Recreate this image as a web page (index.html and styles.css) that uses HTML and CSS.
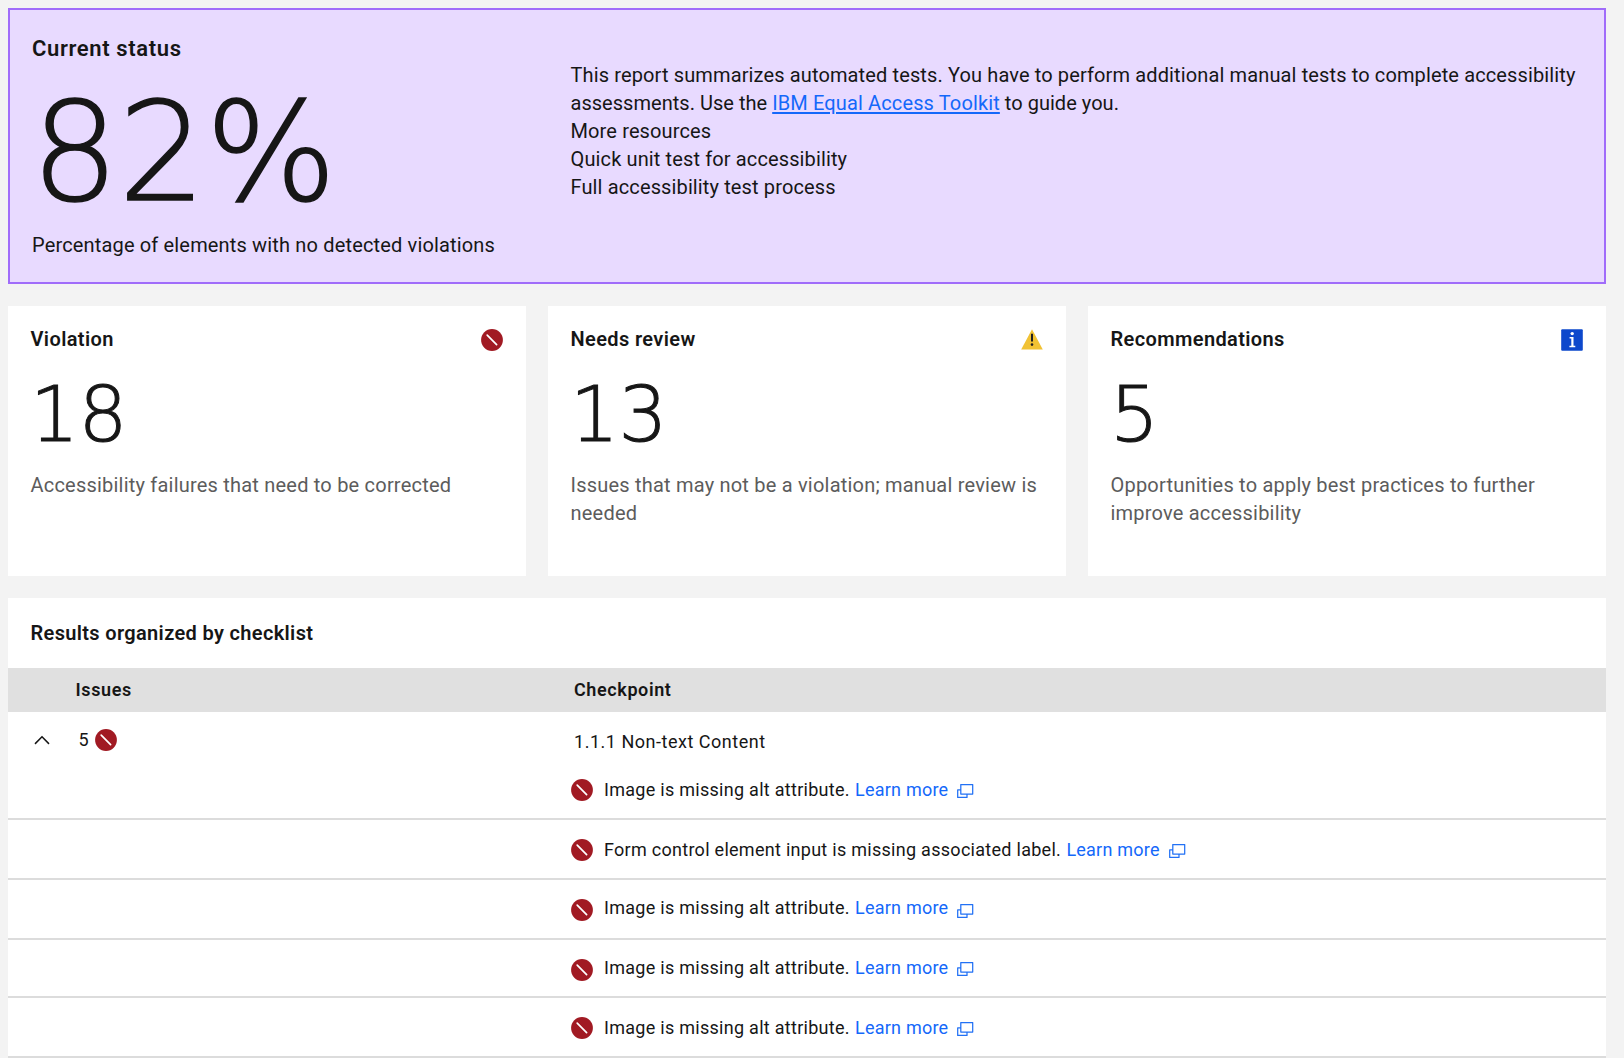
FILE: index.html
```html
<!DOCTYPE html>
<html lang="en">
<head>
<meta charset="utf-8">
<title>Accessibility report</title>
<link rel="stylesheet" href="styles.css">
</head>
<body>
<svg class="defs" aria-hidden="true">
  <symbol id="violation" viewBox="0 0 22 22"><circle cx="11" cy="11" r="10.9" fill="#a11a23"/><path d="M6.2 6.2L15.6 15.6" stroke="#fff" stroke-width="1.7" stroke-linecap="round"/></symbol>
  <symbol id="launch" viewBox="0 0 17 15"><path d="M3.8.6h11.9v9.5H3.8zM3.8 5.8H.7v7.6h9.3v-3.2" fill="none" stroke="#2271f5" stroke-width="1.25" stroke-linejoin="round"/></symbol>
</svg>

<section class="status">
  <div class="score">
    <h1 class="score-title">Current status</h1>
    <div class="score-value">82%</div>
    <p class="score-note">Percentage of elements with no detected violations</p>
  </div>
  <div class="summary">
    <p>This report summarizes automated tests. You have to perform additional manual tests to complete accessibility <span class="guide">assessments. Use the <a class="toolkit" href="#">IBM Equal Access Toolkit</a> to guide you.</span></p>
    <p>More resources</p>
    <p>Quick unit test for accessibility</p>
    <p>Full accessibility test process</p>
  </div>
</section>

<section class="cards">
  <article class="card">
    <div class="card-head"><h2>Violation</h2><svg class="icon"><use href="#violation"/></svg></div>
    <div class="count">18</div>
    <p>Accessibility failures that need to be corrected</p>
  </article>
  <article class="card">
    <div class="card-head"><h2>Needs review</h2>
      <svg class="icon" viewBox="0 0 22 22"><path d="M11 .3L21.8 20.4H.2z" fill="#f1c234"/><path d="M10 4.8h2v7.8h-2z" fill="#202020"/><circle cx="11" cy="15.6" r="1.3" fill="#202020"/></svg></div>
    <div class="count">13</div>
    <p>Issues that may not be a violation; manual review is needed</p>
  </article>
  <article class="card">
    <div class="card-head"><h2>Recommendations</h2>
      <svg class="icon" viewBox="0 0 22 22"><rect x=".2" y=".2" width="21.6" height="21.6" rx="1" fill="#0d48cc"/><circle cx="11.2" cy="4.6" r="1.7" fill="#fff"/><path d="M8.6 8h3.9v8.7h1.8v1.5H8.4v-1.5h1.9V9.5H8.6z" fill="#fff"/></svg></div>
    <div class="count">5</div>
    <p>Opportunities to apply best practices to further improve accessibility</p>
  </article>
</section>

<section class="results">
  <h2 class="results-title">Results organized by checklist</h2>
  <div class="row header"><span>Issues</span><span>Checkpoint</span></div>
  <div class="row group">
    <div class="issues">
      <svg class="chevron" viewBox="0 0 16 10"><path d="M1 8.9L8 1.8l7 7.1" fill="none" stroke="#161616" stroke-width="1.5"/></svg>
      <span>5</span>
      <svg class="icon"><use href="#violation"/></svg>
    </div>
    <span class="checkpoint">1.1.1 Non-text Content</span>
  </div>
  <ul class="items">
    <li class="item"><svg class="icon"><use href="#violation"/></svg><span class="text">Image is missing alt attribute.</span><a class="text" href="#">Learn more</a><svg class="launch"><use href="#launch"/></svg></li>
    <li class="item"><svg class="icon"><use href="#violation"/></svg><span class="text">Form control element input is missing associated label.</span><a class="text" href="#">Learn more</a><svg class="launch"><use href="#launch"/></svg></li>
    <li class="item raised"><svg class="icon"><use href="#violation"/></svg><span class="text">Image is missing alt attribute.</span><a class="text" href="#">Learn more</a><svg class="launch"><use href="#launch"/></svg></li>
    <li class="item raised compact"><svg class="icon"><use href="#violation"/></svg><span class="text">Image is missing alt attribute.</span><a class="text" href="#">Learn more</a><svg class="launch"><use href="#launch"/></svg></li>
    <li class="item"><svg class="icon"><use href="#violation"/></svg><span class="text">Image is missing alt attribute.</span><a class="text" href="#">Learn more</a><svg class="launch"><use href="#launch"/></svg></li>
  </ul>
</section>
</body>
</html>
```
FILE: styles.css
```css
* { box-sizing: border-box; }

body {
  margin: 0;
  padding: 8px 18px 0 8px;
  background: #f3f3f3;
  color: #161616;
  font: 400 20px/28px Roboto, "Noto Sans", sans-serif;
  letter-spacing: 0.128px;
  overflow: hidden;
}

h1, h2, p, ul { margin: 0; padding: 0; }
h2 { font-size: 20px; font-weight: 600; letter-spacing: 0.38px; }
a { color: #1468fa; text-decoration: none; }
.defs { display: none; }
.icon { width: 22px; height: 22px; flex: none; display: block; }

.status {
  display: grid;
  grid-template-columns: 538.5px 1fr;
  height: 276px;
  padding-left: 22px;
  background: #e8daff;
  border: 2px solid #a06cfa;
}
.score { padding-top: 25px; }
.score-title { font-size: 22px; font-weight: 600; line-height: 28px; letter-spacing: 0.63px; }
.score-value {
  margin: 18px 0 6px -1px;
  font: 200 138px/144px "DejaVu Sans", sans-serif;
  letter-spacing: -0.6px;
  -webkit-text-stroke: 1.5px #161616;
}
.score-note { letter-spacing: 0.16px; }
.summary { padding: 51px 20px 0 0; }
.guide { letter-spacing: 0.03px; }
.toolkit {
  letter-spacing: 0.128px;
  text-decoration: underline;
  text-decoration-thickness: 2px;
  text-underline-offset: 2px;
}

.cards {
  display: grid;
  grid-template-columns: repeat(3, 518px);
  gap: 22px;
  margin: 22px 0;
}
.card { height: 270px; padding: 19px 23px 0 22.5px; background: #fff; }
.card-head { display: flex; justify-content: space-between; }
.card-head .icon { margin-top: 4px; }
.count {
  margin: 16px 0 10px -0.5px;
  font: 200 77px/92px "DejaVu Sans", sans-serif;
  letter-spacing: -0.6px;
  -webkit-text-stroke: 1px #161616;
}
.card p { color: #5c5c5c; letter-spacing: 0.21px; }

.results { background: #fff; font-size: 18px; letter-spacing: 0.28px; }
.results-title { height: 70px; padding: 21px 22.5px; letter-spacing: 0.34px; }
.row { display: grid; grid-template-columns: 566px 1fr; }
.header {
  height: 44px;
  background: #e0e0e0;
  font-weight: 600;
  line-height: 44px;
  letter-spacing: 0.6px;
}
.header span:first-child { padding-left: 67.5px; }
.group { height: 48px; }
.issues { display: flex; padding: 14px 0 0 26px; }
.issues .icon { margin: 3px 0 0 6px; }
.issues span { margin-left: 28.5px; }
.chevron { width: 16px; height: 10px; margin-top: 9px; }
.checkpoint { padding-top: 16px; letter-spacing: 0.52px; }

.items { list-style: none; }
.item {
  display: flex;
  height: 60px;
  padding: 16px 0 0 563px;
  border-bottom: 2px solid #dcdcdc;
}
.item .icon { margin: 3px 11px 0 0; }
.item .text { white-space: nowrap; }
.item a { margin: 0 9px 0 5.3px; letter-spacing: 0.22px; }
.launch { width: 17px; height: 15px; margin-top: 8px; }

/* Rows whose label sits slightly above the marker */
.raised .text { margin-top: -2px; }
.compact { height: 58px; }
.compact .launch { margin-top: 6px; }
```
